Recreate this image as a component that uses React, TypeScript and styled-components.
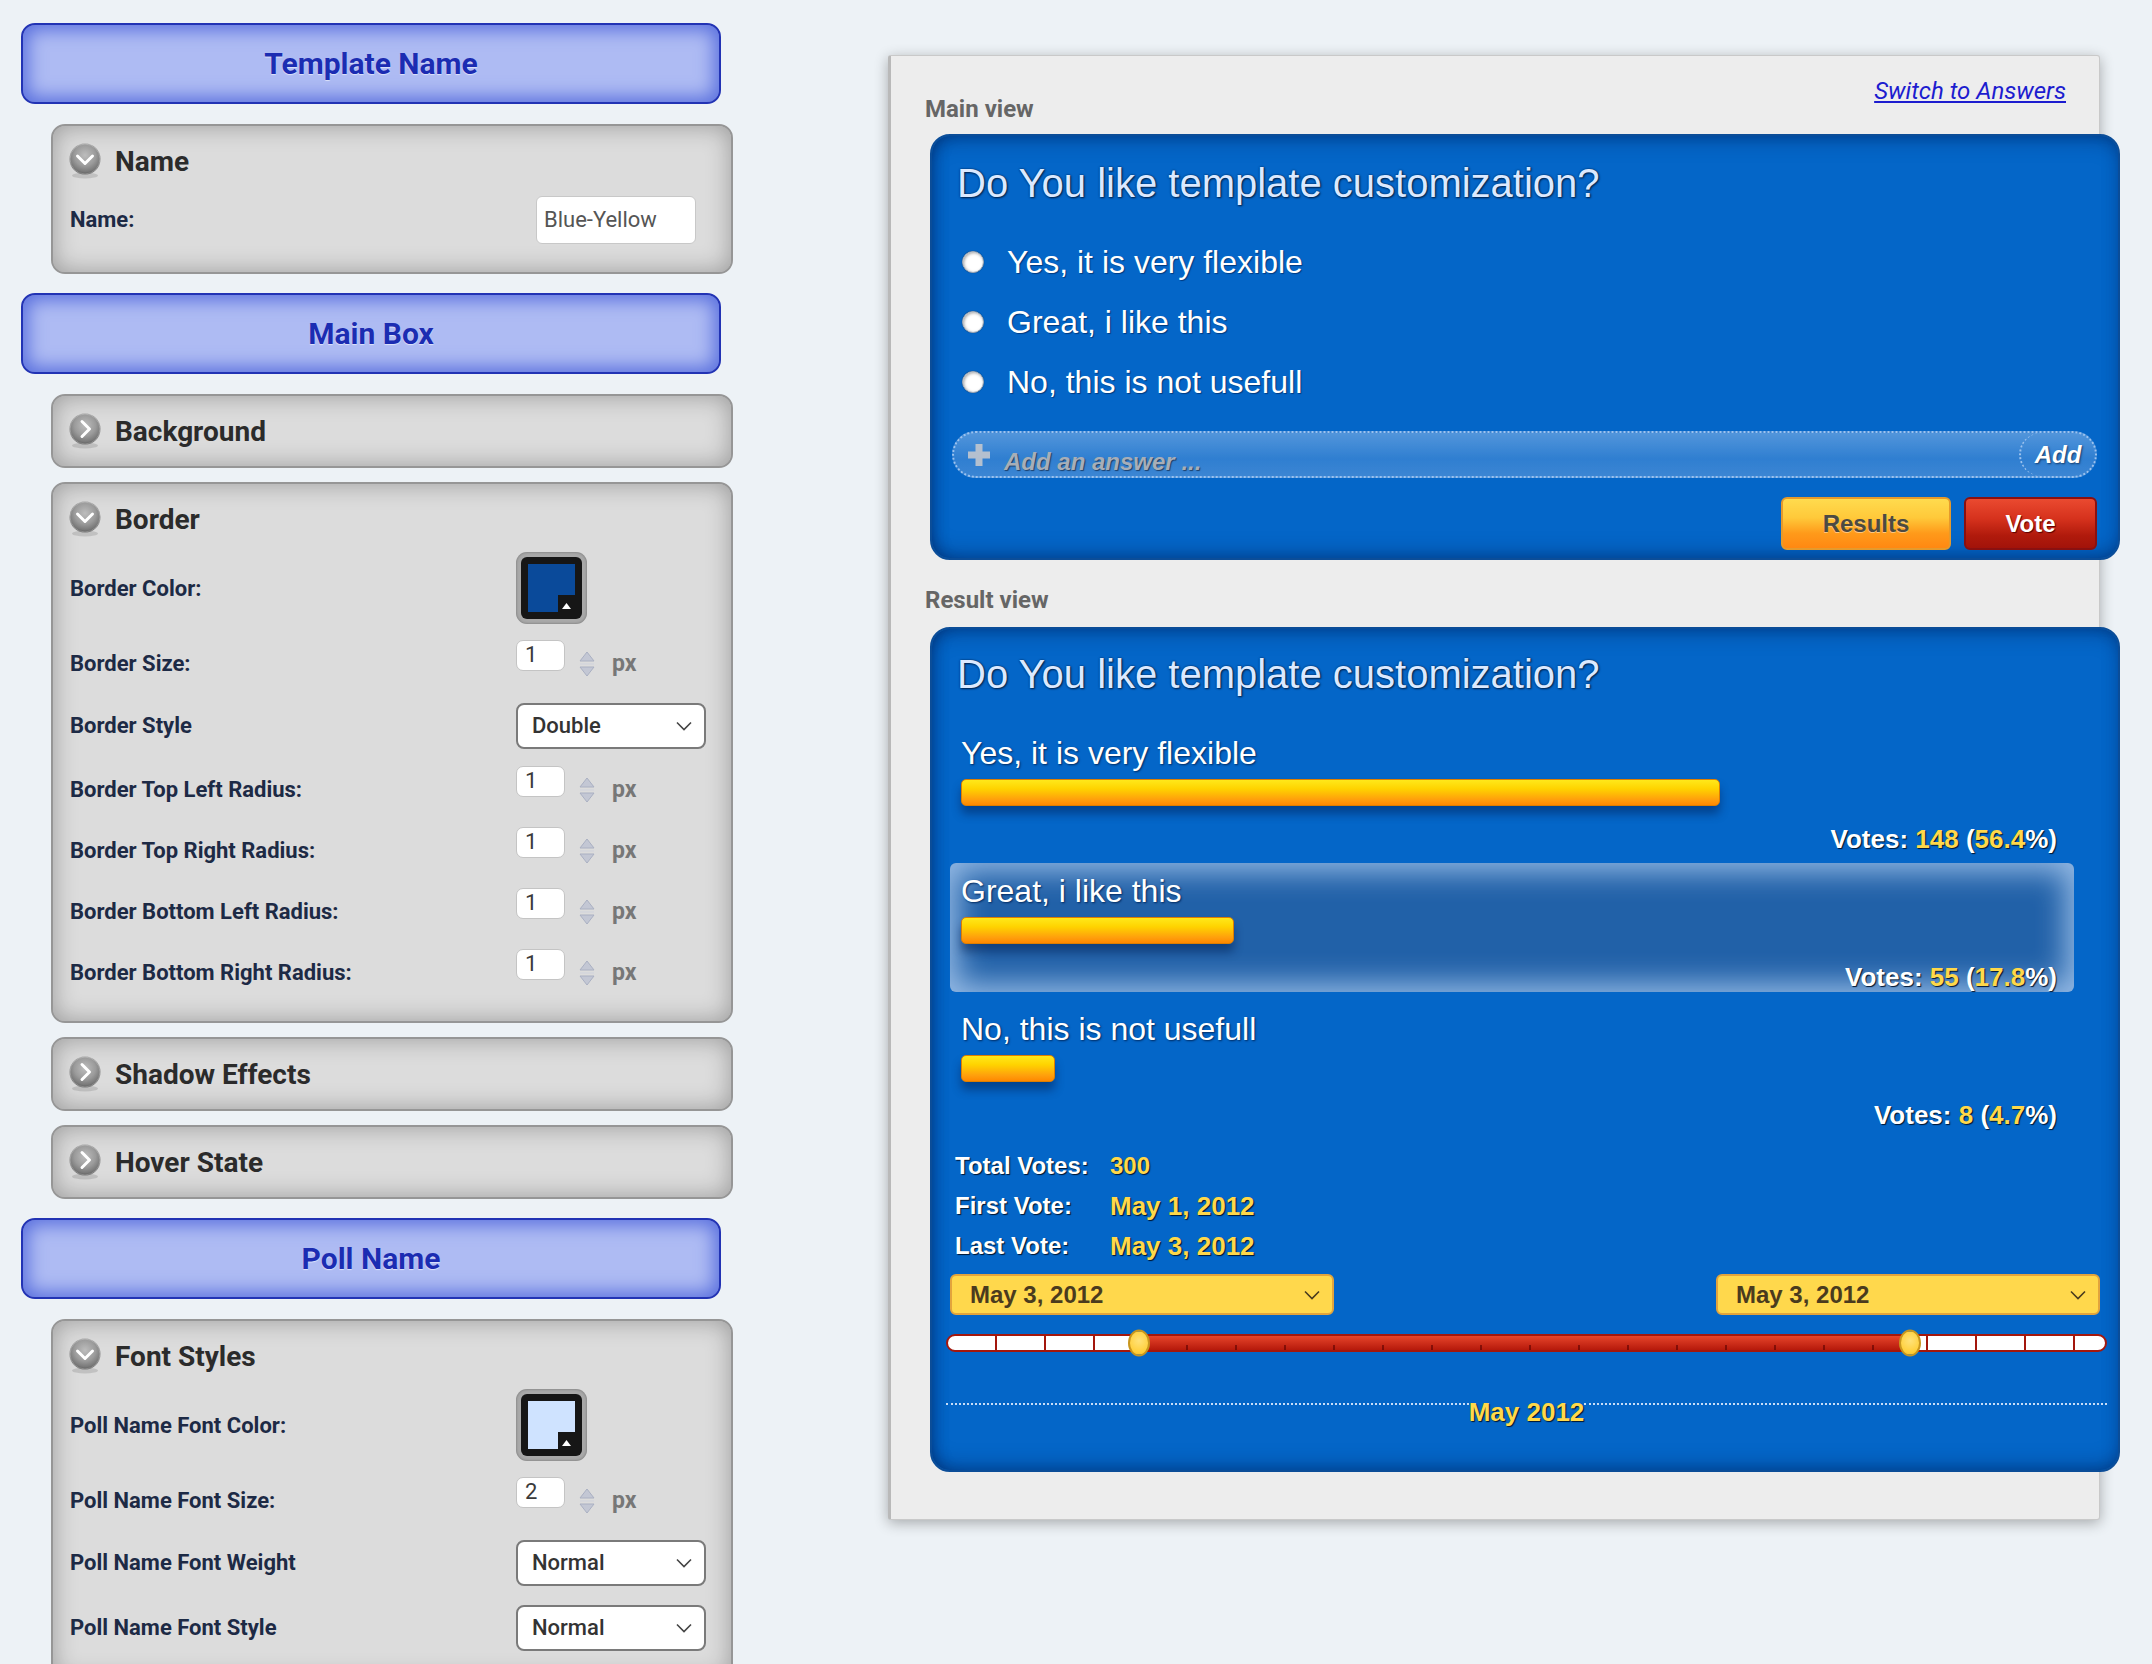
import React from 'react';
import styled, { createGlobalStyle } from 'styled-components';

const FONT_UI = `Roboto, "Liberation Sans", Arial, sans-serif`;
const FONT_POLL = `"Liberation Sans", Arial, sans-serif`;

const GlobalStyle = createGlobalStyle`
  html, body { margin: 0; padding: 0; background: #edf2f6; overflow: hidden; }
  body { font-family: ${FONT_UI}; }
  * { box-sizing: border-box; }
`;

const Page = styled.div`
  display: flex;
  align-items: flex-start;
  padding: 23px 0 0 21px;
  height: 1664px;
  overflow: hidden;
`;

/* ---------------- Left settings column ---------------- */

const LeftColumn = styled.div`
  width: 712px;
  flex-shrink: 0;
  display: flex;
  flex-direction: column;
  gap: 14px;
`;

const SectionHeader = styled.div`
  width: 700px;
  height: 81px;
  margin: 5px 0 6px;
  &:first-child { margin-top: 0; }
  display: flex;
  align-items: center;
  justify-content: center;
  border: 2px solid #2233b4;
  border-radius: 14px;
  background: #aebbf3;
  box-shadow: inset 0 0 18px 5px #5a70de;
  font-size: 30px;
  font-weight: 700;
  color: #1b2cb2;
  text-shadow: 0 1px 1px rgba(255, 255, 255, 0.6);
`;

const Panel = styled.section<{ $open?: boolean }>`
  margin-left: 30px;
  width: 682px;
  border: 2px solid #969696;
  border-radius: 14px;
  background: #dcdcdc;
  box-shadow: inset 0 0 24px rgba(0, 0, 0, 0.3);
  padding: 19px 0 ${(p) => (p.$open ? 27 : 19)}px;
`;

const PanelTitleRow = styled.div`
  display: flex;
  align-items: center;
  gap: 13px;
  height: 32px;
  padding-left: 15px;
`;

const PanelTitle = styled.span`
  font-size: 28px;
  font-weight: 700;
  color: #2b2b2b;
`;

const PanelBody = styled.div`
  display: flex;
  flex-direction: column;
  gap: 16px;
  margin-top: 17px;
`;

const FieldRow = styled.div<{ $h?: number }>`
  display: grid;
  grid-template-columns: 446px 1fr;
  align-items: center;
  height: ${(p) => p.$h ?? 48}px;
  padding-left: 17px;
`;

const FieldLabel = styled.span`
  font-size: 22px;
  font-weight: 700;
  color: #1d2a45;
`;

const TextInput = styled.div`
  margin-left: 20px;
  width: 160px;
  height: 48px;
  display: flex;
  align-items: center;
  padding-left: 7px;
  background: #fff;
  border: 1px solid #c8c8c8;
  border-radius: 6px;
  font-size: 22px;
  color: #555;
`;

const NumberGroup = styled.div`
  display: flex;
  align-items: center;
`;

const NumInput = styled.div`
  width: 49px;
  height: 31px;
  margin-bottom: 16px;
  padding: 1px 0 0 8px;
  background: #fff;
  border: 1px solid #c4c4c4;
  border-radius: 7px;
  font-size: 22px;
  line-height: 26px;
  color: #3a3a3a;
`;

const Spinner = styled.svg`
  margin-left: 13px;
`;

const Unit = styled.span`
  margin-left: 16px;
  font-size: 23px;
  font-weight: 700;
  color: #777;
`;

const SelectBox = styled.div`
  width: 190px;
  height: 46px;
  display: flex;
  align-items: center;
  justify-content: space-between;
  padding: 0 12px 0 14px;
  background: #fff;
  border: 2px solid #7a7a7a;
  border-radius: 8px;
  font-size: 22px;
  font-weight: 500;
  color: #333;
`;

const Swatch = styled.div`
  width: 71px;
  height: 72px;
  padding: 5px;
  border-radius: 11px;
  background: #a9a9a9;
  box-shadow: inset 0 0 3px rgba(0, 0, 0, 0.35);
`;

const SwatchInner = styled.div`
  position: relative;
  width: 100%;
  height: 100%;
  padding: 7px;
  border-radius: 6px;
  background: #161616;
`;

const SwatchColor = styled.div<{ $color: string }>`
  width: 100%;
  height: 100%;
  background: ${(p) => p.$color};
`;

const SwatchNotch = styled.div`
  position: absolute;
  right: 7px;
  bottom: 7px;
  width: 17px;
  height: 17px;
  background: #161616;
  display: flex;
  align-items: flex-end;
  justify-content: center;
  padding-bottom: 3px;
`;

const ToggleIcon = ({ open }: { open: boolean }) => (
  <svg width="34" height="36" viewBox="0 0 34 36">
    <defs>
      <radialGradient id={open ? 'sphO' : 'sphC'} cx="50%" cy="38%" r="62%">
        <stop offset="0%" stopColor="#bdbdbd" />
        <stop offset="55%" stopColor="#9b9b9b" />
        <stop offset="85%" stopColor="#7a7a7a" />
        <stop offset="100%" stopColor="#5e5e5e" />
      </radialGradient>
    </defs>
    <ellipse cx="17" cy="32.5" rx="13" ry="3" fill="rgba(0,0,0,0.12)" />
    <circle cx="17" cy="16" r="15.5" fill={`url(#${open ? 'sphO' : 'sphC'})`} />
    <circle cx="17" cy="16" r="15" fill="none" stroke="rgba(255,255,255,0.25)" strokeWidth="1" />
    {open ? (
      <path d="M9.5 13 L17 20.5 L24.5 13" fill="none" stroke="#fff" strokeWidth="3" strokeLinecap="round" strokeLinejoin="round" />
    ) : (
      <path d="M14 8.5 L21.5 16 L14 23.5" fill="none" stroke="#fff" strokeWidth="3" strokeLinecap="round" strokeLinejoin="round" />
    )}
  </svg>
);

const SpinnerIcon = () => (
  <Spinner width="18" height="32" viewBox="0 0 18 32">
    <path d="M2 13 L9 4 L16 13 Z" fill="#c3c7d4" stroke="#aab0c2" strokeWidth="1" strokeLinejoin="round" />
    <line x1="2" y1="16" x2="16" y2="16" stroke="#cfd2dc" strokeWidth="1" />
    <path d="M2 19 L16 19 L9 28 Z" fill="#c3c7d4" stroke="#aab0c2" strokeWidth="1" strokeLinejoin="round" />
  </Spinner>
);

const Chevron = ({ color }: { color: string }) => (
  <svg width="16" height="10" viewBox="0 0 16 10">
    <path d="M1 1.5 L8 8.5 L15 1.5" fill="none" stroke={color} strokeWidth="1.6" />
  </svg>
);

const ColorField = ({ label, color }: { label: string; color: string }) => (
  <FieldRow $h={72}>
    <FieldLabel>{label}</FieldLabel>
    <Swatch>
      <SwatchInner>
        <SwatchColor $color={color} />
        <SwatchNotch>
          <svg width="9" height="6" viewBox="0 0 9 6">
            <path d="M0 6 L4.5 0 L9 6 Z" fill="#fff" />
          </svg>
        </SwatchNotch>
      </SwatchInner>
    </Swatch>
  </FieldRow>
);

const NumberField = ({ label, value }: { label: string; value: string }) => (
  <FieldRow $h={45}>
    <FieldLabel>{label}</FieldLabel>
    <NumberGroup>
      <NumInput>{value}</NumInput>
      <SpinnerIcon />
      <Unit>px</Unit>
    </NumberGroup>
  </FieldRow>
);

const SelectField = ({ label, value }: { label: string; value: string }) => (
  <FieldRow $h={49}>
    <FieldLabel>{label}</FieldLabel>
    <SelectBox>
      <span>{value}</span>
      <Chevron color="#444" />
    </SelectBox>
  </FieldRow>
);

const CollapsedPanel = ({ title }: { title: string }) => (
  <Panel>
    <PanelTitleRow>
      <ToggleIcon open={false} />
      <PanelTitle>{title}</PanelTitle>
    </PanelTitleRow>
  </Panel>
);

const radii = ['Border Top Left Radius:', 'Border Top Right Radius:', 'Border Bottom Left Radius:', 'Border Bottom Right Radius:'];

/* ---------------- Right preview card ---------------- */

const PreviewCard = styled.div`
  margin: 32px 0 0 155px;
  width: 1212px;
  flex-shrink: 0;
  background: #ededed;
  border: 1px solid #c9c9c9;
  border-left: 3px solid #b9b9b9;
  border-radius: 3px;
  box-shadow: 0 3px 14px rgba(0, 0, 0, 0.3);
  padding: 23px 33px 47px 34px;
`;

const CardHeader = styled.div`
  display: flex;
  justify-content: space-between;
  align-items: flex-start;
`;

const ViewLabel = styled.div<{ $top?: number }>`
  margin-top: ${(p) => p.$top ?? 0}px;
  font-size: 24px;
  font-weight: 700;
  line-height: 28px;
  color: #666;
`;

const SwitchLink = styled.a`
  font-size: 24px;
  line-height: 24px;
  font-style: italic;
  color: #1c1ccf;
  text-decoration: underline;
`;

const PollBox = styled.div<{ $top: number }>`
  width: 1190px;
  margin: ${(p) => p.$top}px 0 0 5px;
  border: 2px solid #0b4d98;
  border-radius: 20px;
  background: #0466c8;
  box-shadow: inset 0 10px 22px -10px rgba(0, 20, 70, 0.55), inset 0 -10px 22px -10px rgba(0, 20, 70, 0.55),
    inset 10px 0 18px -12px rgba(0, 20, 70, 0.4);
  font-family: ${FONT_POLL};
`;

const MainBox = styled(PollBox)`
  padding: 23px 21px 8px 20px;
`;

const ResultBox = styled(PollBox)`
  padding: 21px 18px 44px 18px;
`;

const Question = styled.div<{ $indent: number }>`
  margin-left: ${(p) => p.$indent}px;
  font-size: 40px;
  line-height: 48px;
  color: #dbe9ff;
  text-shadow: 1px 1px 2px #00224d, 0 0 2px #00224d;
`;

const OptionList = styled.div`
  margin-top: 25px;
  display: flex;
  flex-direction: column;
`;

const OptionRow = styled.div`
  height: 60px;
  display: flex;
  align-items: center;
  gap: 23px;
  padding-left: 10px;
`;

const Radio = styled.span`
  width: 22px;
  height: 22px;
  border-radius: 50%;
  background: #fff;
  border: 1px solid #9aa7b8;
  box-shadow: inset 1px 1px 3px rgba(0, 0, 0, 0.35), 0 0 1px rgba(0, 0, 0, 0.4);
`;

const OptionText = styled.span`
  font-size: 32px;
  color: #fff;
  text-shadow: 1px 1px 1px #003a80;
`;

const AddBar = styled.div`
  margin-top: 19px;
  height: 47px;
  display: flex;
  align-items: stretch;
  border: 2px dotted #9cc2ee;
  border-radius: 24px;
  background: linear-gradient(rgba(190, 215, 245, 0.42), rgba(150, 185, 230, 0.3) 60%, rgba(150, 185, 230, 0.38));
`;

const AddField = styled.div`
  flex: 1;
  display: flex;
  align-items: center;
  gap: 12px;
  padding: 0 0 0 12px;
`;

const AddPlaceholder = styled.span`
  padding-top: 14px;
  font-size: 24px;
  font-weight: 700;
  font-style: italic;
  color: #a7aeb8;
  text-shadow: 1px 1px 1px #1d3f6a;
`;

const AddButton = styled.div`
  width: 76px;
  display: flex;
  align-items: center;
  justify-content: center;
  border-left: 2px dotted #9cc2ee;
  border-radius: 24px 0 0 24px;
  font-size: 24px;
  font-weight: 700;
  font-style: italic;
  color: #fff;
  text-shadow: 1px 1px 2px #143b6a;
`;

const ButtonRow = styled.div`
  margin-top: 19px;
  display: flex;
  justify-content: flex-end;
  gap: 13px;
`;

const PollButton = styled.div<{ $variant: 'results' | 'vote' }>`
  width: ${(p) => (p.$variant === 'results' ? 170 : 133)}px;
  height: 53px;
  display: flex;
  align-items: center;
  justify-content: center;
  border-radius: 6px;
  font-size: 24px;
  font-weight: 700;
  border: 2px solid ${(p) => (p.$variant === 'results' ? '#e59a2c' : '#8a1010')};
  background: ${(p) =>
    p.$variant === 'results'
      ? 'linear-gradient(#ffdb4e 0%, #ffc93a 38%, #ff9a1a 70%, #ff8812 100%)'
      : 'linear-gradient(#ea4a30 0%, #d6321d 40%, #b01a0c 75%, #a2130a 100%)'};
  color: ${(p) => (p.$variant === 'results' ? '#4c4a42' : '#fff')};
  text-shadow: ${(p) => (p.$variant === 'results' ? '0 1px 0 rgba(255,255,255,0.45)' : '1px 1px 1px #5a0000')};
`;

const ResultList = styled.div`
  margin: 27px 26px 0 0;
  display: flex;
  flex-direction: column;
  gap: 9px;
`;

const ResultRow = styled.div<{ $highlight?: boolean }>`
  height: 129px;
  padding: 10px 17px 0 11px;
  border-radius: 6px;
  background: ${(p) => (p.$highlight ? '#2161a8' : 'transparent')};
  box-shadow: ${(p) => (p.$highlight ? 'inset 0 0 30px 8px rgba(180, 210, 245, 0.8)' : 'none')};
`;

const ResultLabel = styled.div`
  font-size: 32px;
  line-height: 36px;
  color: #fff;
  text-shadow: 1px 1px 2px #002a60;
`;

const Bar = styled.div`
  margin-top: 8px;
  height: 27px;
  border-radius: 5px;
  border: 1px solid #de7e00;
  background: linear-gradient(#ffe81a 0%, #ffd300 35%, #ff9f0c 78%, #ff8800 100%);
  box-shadow: 0 8px 10px rgba(0, 25, 70, 0.45);
`;

const VotesLine = styled.div`
  margin-top: 18px;
  line-height: 30px;
  text-align: right;
  font-size: 26px;
  font-weight: 700;
  color: #fff;
  text-shadow: 1px 1px 1px #001530;
`;

const Hl = styled.span`
  color: #ffd84a;
`;

const Stats = styled.div`
  margin: 16px 0 0 5px;
  display: flex;
  flex-direction: column;
`;

const StatRow = styled.div`
  height: 40px;
  display: grid;
  grid-template-columns: 155px auto;
  align-items: center;
  font-weight: 700;
  text-shadow: 1px 1px 1px #001530;
`;

const StatLabel = styled.span`
  font-size: 24px;
  color: #fff;
`;

const StatValue = styled.span<{ $size: number }>`
  font-size: ${(p) => p.$size}px;
  color: #ffd84a;
`;

const DateRow = styled.div`
  margin-top: 8px;
  display: flex;
  justify-content: space-between;
`;

const DateSelect = styled.div`
  width: 384px;
  height: 41px;
  display: flex;
  align-items: center;
  justify-content: space-between;
  padding: 0 12px 0 18px;
  background: #ffd84c;
  border: 2px solid #e2a43c;
  border-radius: 6px;
  font-size: 24px;
  font-weight: 700;
  color: #4a3b1e;
`;

const SliderTrack = styled.div`
  position: relative;
  height: 18px;
  margin: 19px -7px 0 -4px;
  border: 2px solid #a3170d;
  border-radius: 9px;
  background-color: #fff;
  background-image: repeating-linear-gradient(90deg, transparent 0 47px, #a3170d 47px 49px);
`;

const SliderRange = styled.div`
  position: absolute;
  top: 0;
  bottom: 0;
  background-image: repeating-linear-gradient(90deg, transparent 0 47px, rgba(90, 0, 0, 0.6) 47px 49px),
    linear-gradient(#e6442a, #b5190b);
  background-size: 100% 5px, 100% 100%;
  background-position: 0 100%, 0 0;
  background-repeat: no-repeat;
`;

const SliderHandle = styled.div`
  position: absolute;
  top: 50%;
  width: 22px;
  height: 27px;
  transform: translate(-50%, -50%);
  border-radius: 50%;
  border: 2px solid #c8961e;
  background: radial-gradient(circle at 50% 40%, #ffe27a, #ffcf3a 70%, #f0b820);
`;

const Timeline = styled.div`
  margin: 46px -7px 0 -4px;
  display: flex;
  align-items: flex-start;
`;

const TimelineLine = styled.div`
  flex: 1;
  margin-top: 5px;
  border-top: 2px dotted rgba(235, 242, 255, 0.85);
`;

const TimelineLabel = styled.span`
  font-size: 26px;
  line-height: 28px;
  font-weight: 700;
  color: #ffd84a;
  text-shadow: 1px 1px 1px #001530;
`;

const PlusIcon = () => (
  <svg width="26" height="26" viewBox="0 0 26 26">
    <path d="M9.5 2 H16.5 V9.5 H24 V16.5 H16.5 V24 H9.5 V16.5 H2 V9.5 H9.5 Z" fill="#c2c6ce" opacity="0.9" />
  </svg>
);

const results = [
  { label: 'Yes, it is very flexible', votes: 148, pct: '56.4', width: 759 },
  { label: 'Great, i like this', votes: 55, pct: '17.8', width: 273, highlight: true },
  { label: 'No, this is not usefull', votes: 8, pct: '4.7', width: 94 },
];

const range = { from: 191, to: 962 };

export default function App() {
  return (
    <>
      <GlobalStyle />
      <Page>
        <LeftColumn>
          <SectionHeader>Template Name</SectionHeader>
          <Panel $open>
            <PanelTitleRow>
              <ToggleIcon open />
              <PanelTitle>Name</PanelTitle>
            </PanelTitleRow>
            <PanelBody>
              <FieldRow $h={51}>
                <FieldLabel>Name:</FieldLabel>
                <TextInput>Blue-Yellow</TextInput>
              </FieldRow>
            </PanelBody>
          </Panel>

          <SectionHeader>Main Box</SectionHeader>
          <CollapsedPanel title="Background" />
          <Panel $open>
            <PanelTitleRow>
              <ToggleIcon open />
              <PanelTitle>Border</PanelTitle>
            </PanelTitleRow>
            <PanelBody>
              <ColorField label="Border Color:" color="#0a4a9a" />
              <NumberField label="Border Size:" value="1" />
              <SelectField label="Border Style" value="Double" />
              {radii.map((r) => (
                <NumberField key={r} label={r} value="1" />
              ))}
            </PanelBody>
          </Panel>
          <CollapsedPanel title="Shadow Effects" />
          <CollapsedPanel title="Hover State" />

          <SectionHeader>Poll Name</SectionHeader>
          <Panel $open>
            <PanelTitleRow>
              <ToggleIcon open />
              <PanelTitle>Font Styles</PanelTitle>
            </PanelTitleRow>
            <PanelBody>
              <ColorField label="Poll Name Font Color:" color="#cfe3ff" />
              <NumberField label="Poll Name Font Size:" value="2" />
              <SelectField label="Poll Name Font Weight" value="Normal" />
              <SelectField label="Poll Name Font Style" value="Normal" />
            </PanelBody>
          </Panel>
        </LeftColumn>

        <PreviewCard>
          <CardHeader>
            <ViewLabel $top={16}>Main view</ViewLabel>
            <SwitchLink>Switch to Answers</SwitchLink>
          </CardHeader>
          <MainBox $top={11}>
            <Question $indent={5}>Do You like template customization?</Question>
            <OptionList>
              {results.map((r) => (
                <OptionRow key={r.label}>
                  <Radio />
                  <OptionText>{r.label}</OptionText>
                </OptionRow>
              ))}
            </OptionList>
            <AddBar>
              <AddField>
                <PlusIcon />
                <AddPlaceholder>Add an answer ...</AddPlaceholder>
              </AddField>
              <AddButton>Add</AddButton>
            </AddBar>
            <ButtonRow>
              <PollButton $variant="results">Results</PollButton>
              <PollButton $variant="vote">Vote</PollButton>
            </ButtonRow>
          </MainBox>

          <ViewLabel $top={26}>Result view</ViewLabel>
          <ResultBox $top={13}>
            <Question $indent={7}>Do You like template customization?</Question>
            <ResultList>
              {results.map((r) => (
                <ResultRow key={r.label} $highlight={r.highlight}>
                  <ResultLabel>{r.label}</ResultLabel>
                  <Bar style={{ width: r.width }} />
                  <VotesLine>
                    Votes: <Hl>{r.votes}</Hl> (<Hl>{r.pct}</Hl>%)
                  </VotesLine>
                </ResultRow>
              ))}
            </ResultList>
            <Stats>
              <StatRow>
                <StatLabel>Total Votes:</StatLabel>
                <StatValue $size={24}>300</StatValue>
              </StatRow>
              <StatRow>
                <StatLabel>First Vote:</StatLabel>
                <StatValue $size={26}>May 1, 2012</StatValue>
              </StatRow>
              <StatRow>
                <StatLabel>Last Vote:</StatLabel>
                <StatValue $size={26}>May 3, 2012</StatValue>
              </StatRow>
            </Stats>
            <DateRow>
              <DateSelect>
                <span>May 3, 2012</span>
                <Chevron color="#4a3b1e" />
              </DateSelect>
              <DateSelect>
                <span>May 3, 2012</span>
                <Chevron color="#4a3b1e" />
              </DateSelect>
            </DateRow>
            <SliderTrack>
              <SliderRange style={{ left: range.from, width: range.to - range.from }} />
              <SliderHandle style={{ left: range.from }} />
              <SliderHandle style={{ left: range.to }} />
            </SliderTrack>
            <Timeline>
              <TimelineLine />
              <TimelineLabel>May 2012</TimelineLabel>
              <TimelineLine />
            </Timeline>
          </ResultBox>
        </PreviewCard>
      </Page>
    </>
  );
}
